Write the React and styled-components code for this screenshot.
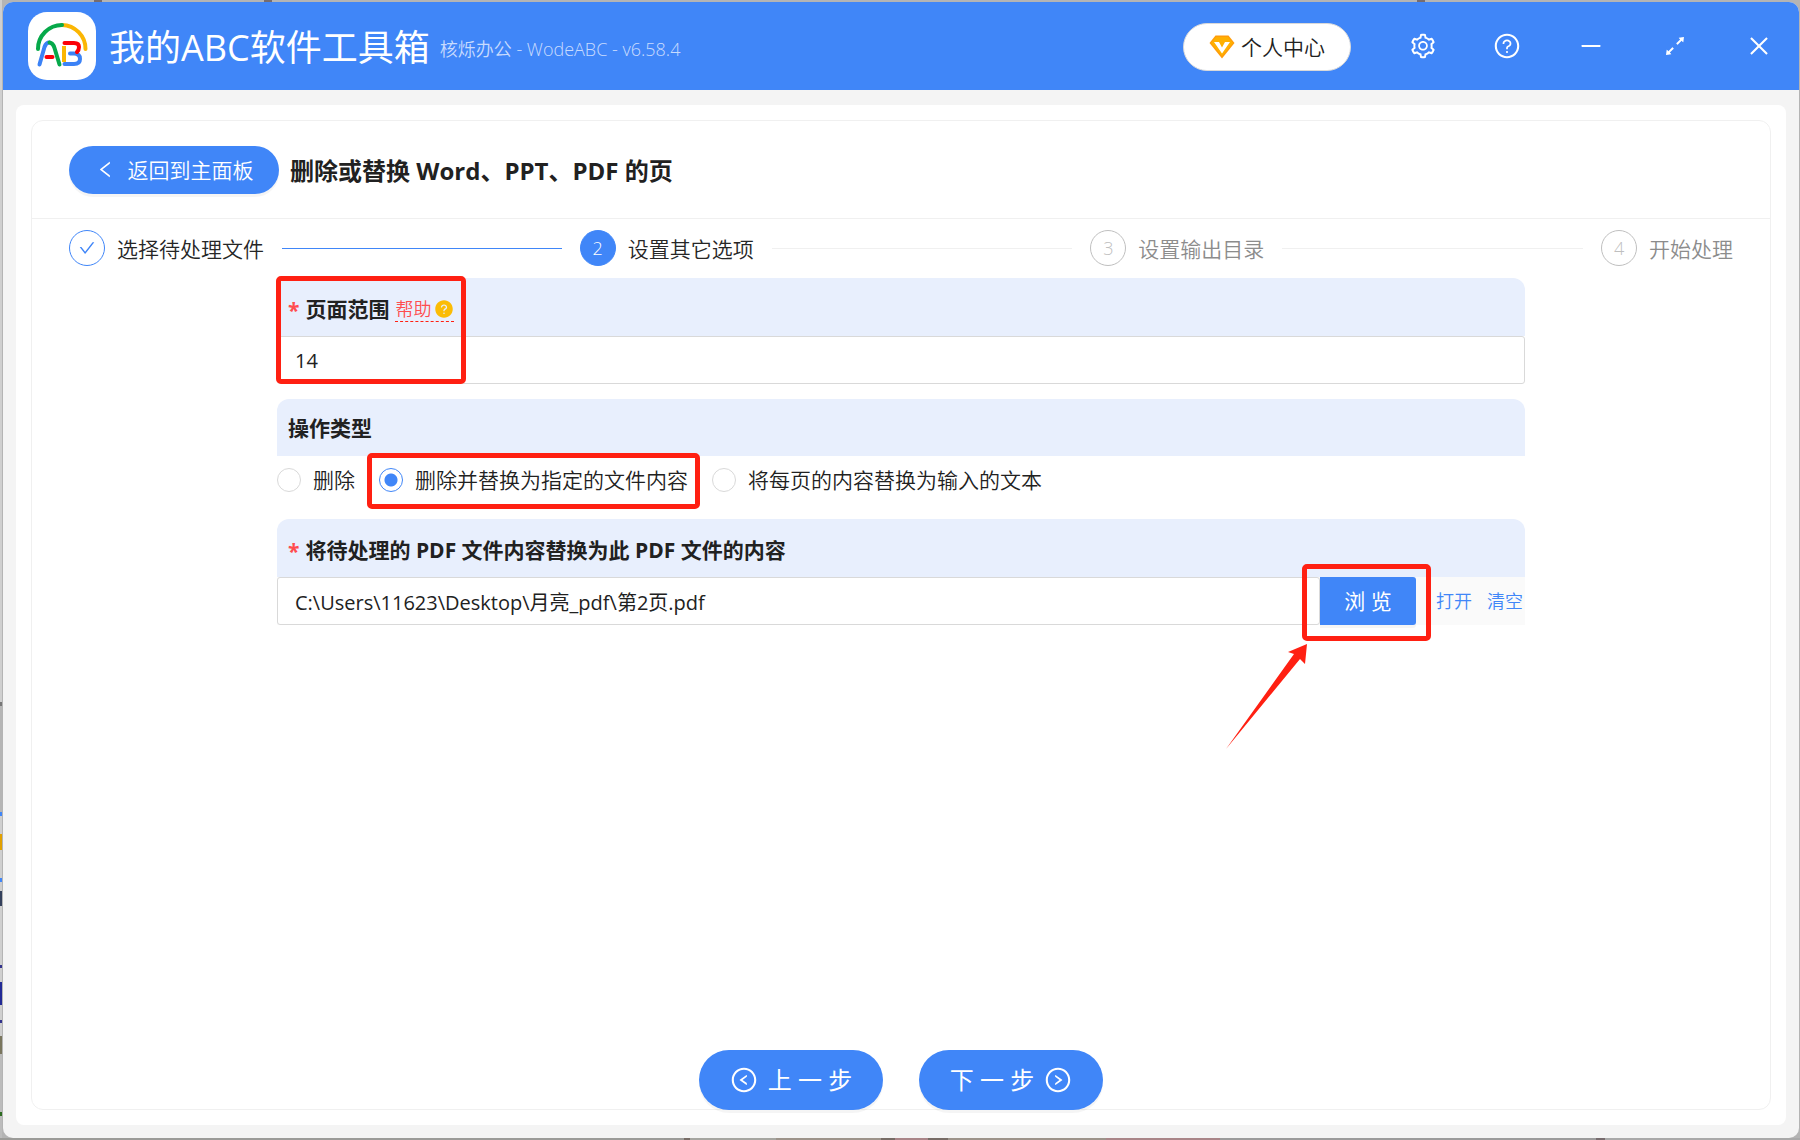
import React, { useState } from 'react';
import styled, { createGlobalStyle } from 'styled-components';
import {
  AiFillQuestionCircle,
  AiOutlineArrowsAlt,
  AiOutlineCheck,
  AiOutlineClose,
  AiOutlineLeft,
  AiOutlineLeftCircle,
  AiOutlineMinus,
  AiOutlineQuestionCircle,
  AiOutlineRightCircle,
  AiOutlineSetting,
} from 'react-icons/ai';

const blue = '#4086f8';
const red = '#ff2012';

const GlobalStyle = createGlobalStyle`
  * {
    box-sizing: border-box;
  }

  body {
    margin: 0;
    color: #212121;
    font-family: 'Open Sans', 'Noto Sans CJK SC', sans-serif;
    font-size: 21px;
    font-weight: 350;
    line-height: 32px;
  }

  button, input {
    font: inherit;
    color: inherit;
  }

  button {
    border: 0;
    padding: 0;
    cursor: pointer;
  }

  svg {
    display: block;
    flex: none;
  }
`;

/* slivers of the desktop show round the window */
const Desktop = styled.div`
  display: flex;
  min-height: 100vh;
  padding: 2px 1px 2px 3px;
  background:
    linear-gradient(90deg, transparent 94px, #776c6e 94px 102px, transparent 102px 264px, #776c6e 264px 272px, transparent 272px 1417px, #776c6e 1417px 1425px, transparent 1425px) top / 100% 2px no-repeat,
    linear-gradient(90deg, #9b9b98 0 684px, #776c66 684px 690px, #a5a5a0 690px 776px, #9c938a 776px 881px, #776c66 881px 895px, #a98588 895px 928px, #776c66 928px 948px, #9c938a 948px 1106px, #a98588 1106px 1220px, #9b9b9b 1220px 1596px, #776c6e 1596px 1605px, #a9a9a9 1605px) bottom / 100% 2px no-repeat,
    linear-gradient(#cfcfcf 0 702px, #777 702px 706px, #b5b5b5 706px 812px, #4086f8 812px 816px, #cfcfcf 816px 834px, #e2a100 834px 850px, #cfcfcf 850px 878px, #4086f8 878px 882px, #cfcfcf 882px 891px, #34405c 891px 906px, #cfcfcf 906px 965px, #33338c 965px 968px, #cfcfcf 968px 982px, #222a96 982px 1005px, #cfcfcf 1005px 1020px, #33338c 1020px 1023px, #cfcfcf 1023px 1036px, #7a765e 1036px 1054px, #bcbcbc 1054px 1112px, #2d6b21 1112px 1116px, #bcbcbc 1116px) left / 2px 100% no-repeat,
    #b4b4b4;
`;

const Window = styled.div`
  display: flex;
  flex: 1;
  flex-direction: column;
  overflow: hidden;
  border-radius: 10px;
  background: #f4f4f4;
`;

const TitleBar = styled.header`
  display: flex;
  align-items: center;
  height: 88px;
  padding: 0 26px 0 25px;
  background: ${blue};
  color: #fff;
`;

const AppName = styled.h1`
  margin: 0 10px 0 13px;
  padding-top: 4px;
  font-size: 36px;
  font-weight: 400;
  line-height: 48px;
`;

const Version = styled.span`
  flex: 1;
  padding-top: 6px;
  color: #c8dbfe;
  font-size: 18px;
`;

const AccountButton = styled.button`
  display: flex;
  align-items: center;
  justify-content: center;
  gap: 6px;
  width: 168px;
  height: 48px;
  margin-top: 2px;
  border: 1px solid #d9d9d9;
  border-radius: 24px;
  background: #fff;
  color: #212121;
`;

const WindowControls = styled.div`
  display: flex;
  gap: 56px;
  margin-left: 58px;
`;

const ControlButton = styled.button`
  background: none;
  font-size: 28px;

  svg {
    padding: ${props => props.$inset || 0}px;
  }
`;

const Panel = styled.main`
  display: flex;
  flex: 1;
  margin: 15px 13px 13px;
  padding: 15px;
  border-radius: 8px;
  background: #fff;
`;

const Card = styled.div`
  display: flex;
  flex: 1;
  flex-direction: column;
  border: 1px solid #f0f0f0;
  border-radius: 12px;
`;

const CardHeader = styled.div`
  display: flex;
  align-items: center;
  gap: 11px;
  height: 98px;
  padding: 0 37px;
  border-bottom: 1px solid #f0f0f0;
`;

const BackButton = styled.button`
  display: flex;
  align-items: center;
  justify-content: center;
  gap: 12px;
  width: 210px;
  height: 48px;
  border-radius: 24px;
  background: ${blue};
  box-shadow: 0 3px 0 rgba(0, 0, 0, 0.04);
  color: #fff;
`;

const Heading = styled.h2`
  margin: 0;
  padding-top: 2px;
  font-size: 24px;
  font-weight: 700;
`;

const Steps = styled.ol`
  display: flex;
  gap: 18px;
  margin: 0;
  padding: 11px 37px 12px;
  list-style: none;
`;

const Step = styled.li`
  display: flex;
  flex: 1;
  align-items: center;
  color: ${props => (props.$waiting ? '#8c8c8c' : '#262626')};

  &:last-child {
    flex: none;
  }

  &:not(:last-child)::after {
    content: '';
    flex: 1;
    height: 1px;
    margin-left: 18px;
    background: ${props => (props.$done ? blue : '#f0f0f0')};
  }
`;

const StepIcon = styled.span`
  display: flex;
  align-items: center;
  justify-content: center;
  width: 36px;
  height: 36px;
  margin-right: 12px;
  border: 1px solid ${props => (props.$waiting ? '#bfbfbf' : blue)};
  border-radius: 50%;
  background: ${props => (props.$active ? blue : '#fff')};
  color: ${props => (props.$active ? '#fff' : props.$waiting ? '#bfbfbf' : blue)};
  font-size: 18px;
`;

const StepName = styled.span`
  padding-top: 2px;
`;

const FormArea = styled.div`
  display: flex;
  flex: 1;
  justify-content: center;
  padding: 0 37px;
`;

const Form = styled.form`
  display: flex;
  flex: none;
  flex-direction: column;
  gap: 15px;
  width: 75%;
`;

const Field = styled.div`
  position: relative;
`;

const FieldHeader = styled.div`
  display: flex;
  align-items: center;
  gap: 6px;
  height: ${props => (props.$required ? 58 : 57)}px;
  padding: ${props => (props.$required ? 4 : 1)}px 11px 0;
  border-radius: 12px 12px 0 0;
  background: #e8effd;
`;

const FieldLabel = styled.label`
  display: flex;
  gap: 6px;
  font-weight: 700;
`;

const Required = styled.span`
  padding-top: 1px;
  color: #ff4d4f;
`;

const HelpLink = styled.a`
  display: flex;
  align-items: center;
  gap: 3px;
  border-bottom: 1px dashed ${red};
  color: #ff4d4f;
  font-size: 18px;
  line-height: 24px;
  text-decoration: none;

  svg {
    color: #fbbc05;
    font-size: 20px;
  }
`;

const TextInput = styled.input`
  display: block;
  flex: 1;
  width: 100%;
  min-width: 0;
  height: 48px;
  padding: 0 17px;
  border: 1px solid #d9d9d9;
  border-radius: 3px;
  background: #fff;
  font-size: 20px;
  font-weight: 400;
  outline: none;
`;

const RadioRow = styled.div`
  display: flex;
  align-items: center;
  gap: 24px;
  height: 48px;
`;

const RadioLabel = styled.label`
  position: relative;
  display: flex;
  align-items: center;
  gap: 12px;
`;

const Radio = styled.input`
  appearance: none;
  width: 24px;
  height: 24px;
  margin: 0;
  border: 1px solid #d9d9d9;
  border-radius: 50%;
  background: #fff;

  &:checked {
    border-color: ${blue};
    background: radial-gradient(circle, ${blue} 6px, #fff 7px);
  }
`;

const FileRow = styled.div`
  display: flex;
  background: #fafafa;
`;

const BrowseWrap = styled.div`
  position: relative;
`;

const BrowseButton = styled.button`
  display: block;
  width: 96px;
  height: 48px;
  border-radius: 0 3px 3px 0;
  background: ${blue};
  box-shadow: 0 3px 0 rgba(0, 0, 0, 0.04);
  color: #fff;
  font-weight: 400;
`;

const FileLinks = styled.div`
  display: flex;
  align-items: center;
  gap: 15px;
  padding: 0 2px 0 20px;
  font-size: 18px;

  a {
    color: ${blue};
    text-decoration: none;
  }
`;

/* red frames of the tutorial, laid over the controls they point at */
const Highlight = styled.span`
  position: absolute;
  inset: ${props => props.$inset};
  width: ${props => props.$width || 'auto'};
  border: 5px solid ${red};
  border-radius: 5px;
  pointer-events: none;
`;

const Arrow = styled.svg`
  position: absolute;
  top: 67px;
  right: 108px;
  pointer-events: none;
`;

const Footer = styled.footer`
  display: flex;
  justify-content: center;
  gap: 36px;
  margin-bottom: -1px;
`;

const StepButton = styled.button`
  display: flex;
  align-items: center;
  justify-content: center;
  gap: 10px;
  width: 184px;
  height: 60px;
  border-radius: 30px;
  background: ${blue};
  box-shadow: 0 3px 0 rgba(0, 0, 0, 0.04);
  color: #fff;
  font-size: 24px;
  font-weight: 400;

  svg {
    font-size: 28px;
  }
`;

const Logo = () => (
  <svg width="68" height="68" viewBox="0 0 68 68" fill="none" strokeWidth="4" strokeLinecap="round">
    <rect width="68" height="68" rx="19" fill="#fff" />
    <path d="M57.5 37 A24 24 0 0 0 34 13" stroke="#fbb603" />
    <path d="M10 37 A24 24 0 0 1 34 13" stroke="#06a94a" />
    <path d="M11.5 52.5 L16.5 35 Q18 30.5 21.5 30.5" stroke="#3b82f6" />
    <path d="M21.5 30.5 Q25 31 26.5 36 L31.5 52.5" stroke="#06a94a" />
    <path d="M18.5 45 H24.5" stroke="#fb0007" />
    <path d="M36 34 V50" stroke="#fbb603" strokeLinecap="butt" />
    <path d="M36.5 52 H46 Q52 52 52 47 Q52 41.5 46 41.5 H42" stroke="#3b82f6" />
    <path d="M36.5 31 H46 Q51 31 51 35 Q51 38 49 40" stroke="#fb0007" />
  </svg>
);

const VipIcon = () => (
  <svg width="26" height="24" viewBox="0 0 26 24">
    <path d="M6.5 0.5 H19.5 L25.5 8 L13 23.5 L0.5 8 Z" fill="#ff9c0a" />
    <path d="M7 2 H19 L24 8 L13 21 L2 8 Z" fill="#ffb001" />
    <path d="M5 7 H10 L13 12.5 L16 7 H21 L13 18.5 Z" fill="#fff" />
  </svg>
);

const steps = ['选择待处理文件', '设置其它选项', '设置输出目录', '开始处理'];
const operations = ['删除', '删除并替换为指定的文件内容', '将每页的内容替换为输入的文本'];
const current = 1;

export default function App() {
  const [range, setRange] = useState('14');
  const [operation, setOperation] = useState(1);
  const [path, setPath] = useState('C:\\Users\\11623\\Desktop\\月亮_pdf\\第2页.pdf');

  return (
    <Desktop>
      <GlobalStyle />
      <Window>
        <TitleBar>
          <Logo />
          <AppName>我的ABC软件工具箱</AppName>
          <Version>核烁办公 - WodeABC - v6.58.4</Version>
          <AccountButton type="button">
            <VipIcon />
            个人中心
          </AccountButton>
          <WindowControls>
            <ControlButton type="button" aria-label="设置">
              <AiOutlineSetting />
            </ControlButton>
            <ControlButton type="button" aria-label="帮助">
              <AiOutlineQuestionCircle />
            </ControlButton>
            <ControlButton type="button" aria-label="最小化" $inset={1}>
              <AiOutlineMinus />
            </ControlButton>
            <ControlButton type="button" aria-label="最大化" $inset={1}>
              <AiOutlineArrowsAlt />
            </ControlButton>
            <ControlButton type="button" aria-label="关闭" $inset={1}>
              <AiOutlineClose />
            </ControlButton>
          </WindowControls>
        </TitleBar>
        <Panel>
          <Card>
            <CardHeader>
              <BackButton type="button">
                <AiOutlineLeft />
                返回到主面板
              </BackButton>
              <Heading>删除或替换 Word、PPT、PDF 的页</Heading>
            </CardHeader>
            <Steps>
              {steps.map((name, i) => (
                <Step key={name} $done={i < current} $waiting={i > current}>
                  <StepIcon $active={i === current} $waiting={i > current}>
                    {i < current ? <AiOutlineCheck /> : i + 1}
                  </StepIcon>
                  <StepName>{name}</StepName>
                </Step>
              ))}
            </Steps>
            <FormArea>
              <Form onSubmit={e => e.preventDefault()}>
                <Field>
                  <FieldHeader $required>
                    <FieldLabel htmlFor="range">
                      <Required>*</Required>
                      页面范围
                    </FieldLabel>
                    <HelpLink href="#help">
                      帮助
                      <AiFillQuestionCircle />
                    </HelpLink>
                  </FieldHeader>
                  <TextInput
                    id="range"
                    type="text"
                    value={range}
                    onChange={e => setRange(e.target.value)}
                  />
                  <Highlight $inset="-2px auto 0 -1px" $width="190px" />
                </Field>
                <Field role="radiogroup" aria-labelledby="operation">
                  <FieldHeader>
                    <FieldLabel as="span" id="operation">
                      操作类型
                    </FieldLabel>
                  </FieldHeader>
                  <RadioRow>
                    {operations.map((name, i) => (
                      <RadioLabel key={name}>
                        <Radio
                          type="radio"
                          name="operation"
                          checked={operation === i}
                          onChange={() => setOperation(i)}
                        />
                        {name}
                        {i === 1 && <Highlight $inset="-11px -12px -13px" />}
                      </RadioLabel>
                    ))}
                  </RadioRow>
                </Field>
                <Field>
                  <FieldHeader $required>
                    <FieldLabel htmlFor="path">
                      <Required>*</Required>
                      将待处理的 PDF 文件内容替换为此 PDF 文件的内容
                    </FieldLabel>
                  </FieldHeader>
                  <FileRow>
                    <TextInput
                      id="path"
                      type="text"
                      value={path}
                      onChange={e => setPath(e.target.value)}
                    />
                    <BrowseWrap>
                      <BrowseButton type="button">浏 览</BrowseButton>
                      <Highlight $inset="-13px -15px -16px -18px" />
                      <Arrow width="82" height="106" viewBox="0 0 82 106">
                        <path d="M81 0 L62 8 L68 10 L0 105 L74 15 L79 20 Z" fill={red} />
                      </Arrow>
                    </BrowseWrap>
                    <FileLinks>
                      <a href="#open">打开</a>
                      <a href="#clear">清空</a>
                    </FileLinks>
                  </FileRow>
                </Field>
              </Form>
            </FormArea>
            <Footer>
              <StepButton type="button">
                <AiOutlineLeftCircle />
                上 一 步
              </StepButton>
              <StepButton type="button">
                下 一 步
                <AiOutlineRightCircle />
              </StepButton>
            </Footer>
          </Card>
        </Panel>
      </Window>
    </Desktop>
  );
}
